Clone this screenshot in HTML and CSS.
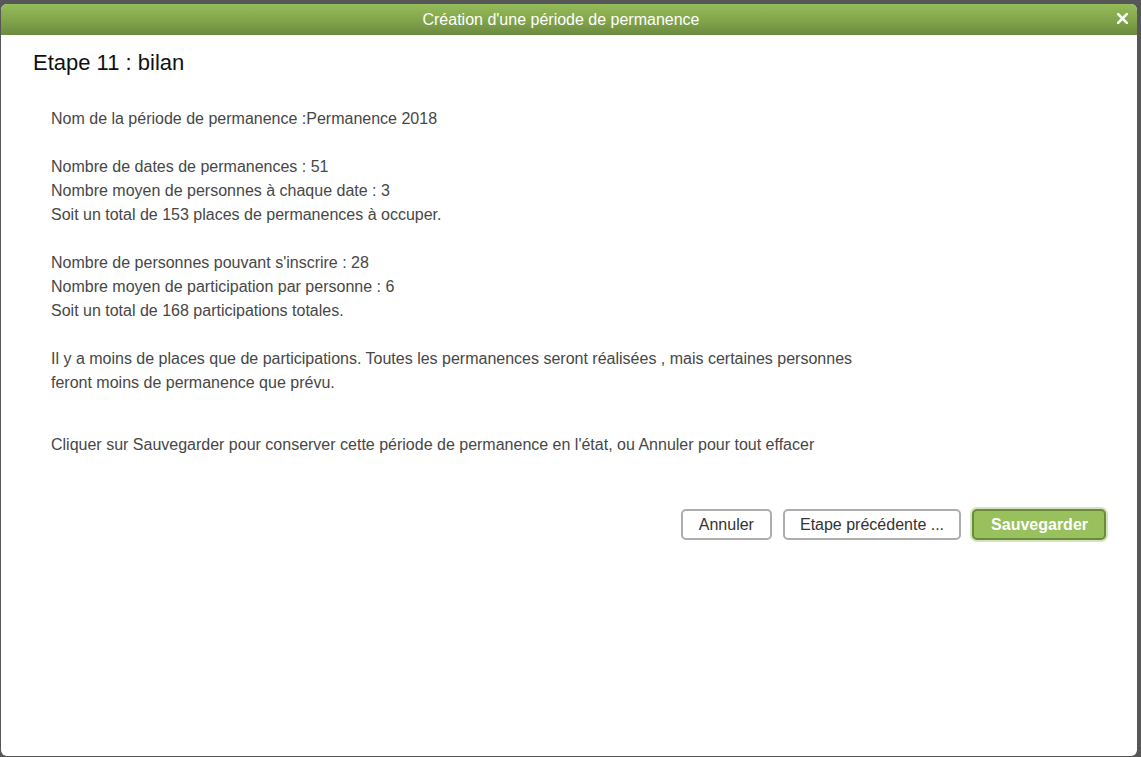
FILE: index.html
```html
<!DOCTYPE html>
<html lang="fr">
<head>
<meta charset="utf-8">
<title>Création d'une période de permanence</title>
<link rel="stylesheet" href="styles.css">
</head>
<body>
<div class="backdrop">
  <div class="dialog">
    <div class="titlebar">
      <span class="title">Création d'une période de permanence</span>
      <svg class="close" width="11" height="11" viewBox="0 0 11 11"><path d="M1.2 1.2 L9.8 9.8 M9.8 1.2 L1.2 9.8" stroke="#fff" stroke-width="2.6" stroke-linecap="square"/></svg>
    </div>
    <div class="content">
      <h1 class="step">Etape 11 : bilan</h1>
      <div class="summary">
        <p>Nom de la période de permanence :Permanence 2018</p>
        <p>Nombre de dates de permanences : 51<br>Nombre moyen de personnes à chaque date : 3<br>Soit un total de 153 places de permanences à occuper.</p>
        <p>Nombre de personnes pouvant s'inscrire : 28<br>Nombre moyen de participation par personne : 6<br>Soit un total de 168 participations totales.</p>
        <p>Il y a moins de places que de participations. Toutes les permanences seront réalisées , mais certaines personnes<br>feront moins de permanence que prévu.</p>
        <p class="hint">Cliquer sur Sauvegarder pour conserver cette période de permanence en l'état, ou Annuler pour tout effacer</p>
      </div>
      <div class="actions">
        <button class="btn btn-cancel">Annuler</button>
        <button class="btn">Etape précédente ...</button>
        <button class="btn btn-primary">Sauvegarder</button>
      </div>
    </div>
  </div>
</div>
</body>
</html>
```

FILE: styles.css
```css
html, body {
  margin: 0;
  padding: 0;
  height: 100%;
}
body {
  background: #575757;
  font-family: "Liberation Sans", Arial, sans-serif;
  overflow: hidden;
}
.backdrop {
  height: 757px;
  padding: 4px 4px 1px 1px;
  box-sizing: border-box;
  display: flex;
}
.dialog {
  flex: 1;
  background: #fff;
  border-radius: 6px;
  display: flex;
  flex-direction: column;
  overflow: hidden;
}
.titlebar {
  height: 31px;
  flex: none;
  background: linear-gradient(to bottom, #95bc5a 0%, #83a64c 50%, #6b8a40 100%);
  display: flex;
  align-items: center;
  justify-content: center;
  position: relative;
  padding-right: 16px;
}
.title {
  color: #fff;
  font-size: 16px;
  line-height: 31px;
}
.close {
  position: absolute;
  right: 9px;
  top: 9px;
}
.content {
  padding: 0 31px 0 32px;
}
.step {
  margin: 14px 0 0 0;
  font-size: 22px;
  font-weight: normal;
  color: #111;
  line-height: 28px;
}
.summary {
  padding: 30px 0 0 18px;
  color: #474747;
  font-size: 16px;
  line-height: 24px;
}
.summary p {
  margin: 0 0 24px 0;
}
.summary p.hint {
  margin-top: 38px;
  margin-bottom: 0;
}
.actions {
  display: flex;
  justify-content: flex-end;
  gap: 11px;
  margin-top: 52px;
}
.btn {
  height: 31px;
  border: 2px solid #adadad;
  border-radius: 5px;
  background: #fff;
  color: #333;
  font-family: "Liberation Sans", Arial, sans-serif;
  font-size: 16px;
  padding: 0 15px;
}
.btn-cancel {
  padding: 0 16px;
}
.btn-primary {
  background: #98c05d;
  border-color: #6b8a40;
  color: #fff;
  font-weight: bold;
  padding: 0 16px 0 17px;
  box-shadow: 0 0 0 2px #d4e6b8;
}
```
